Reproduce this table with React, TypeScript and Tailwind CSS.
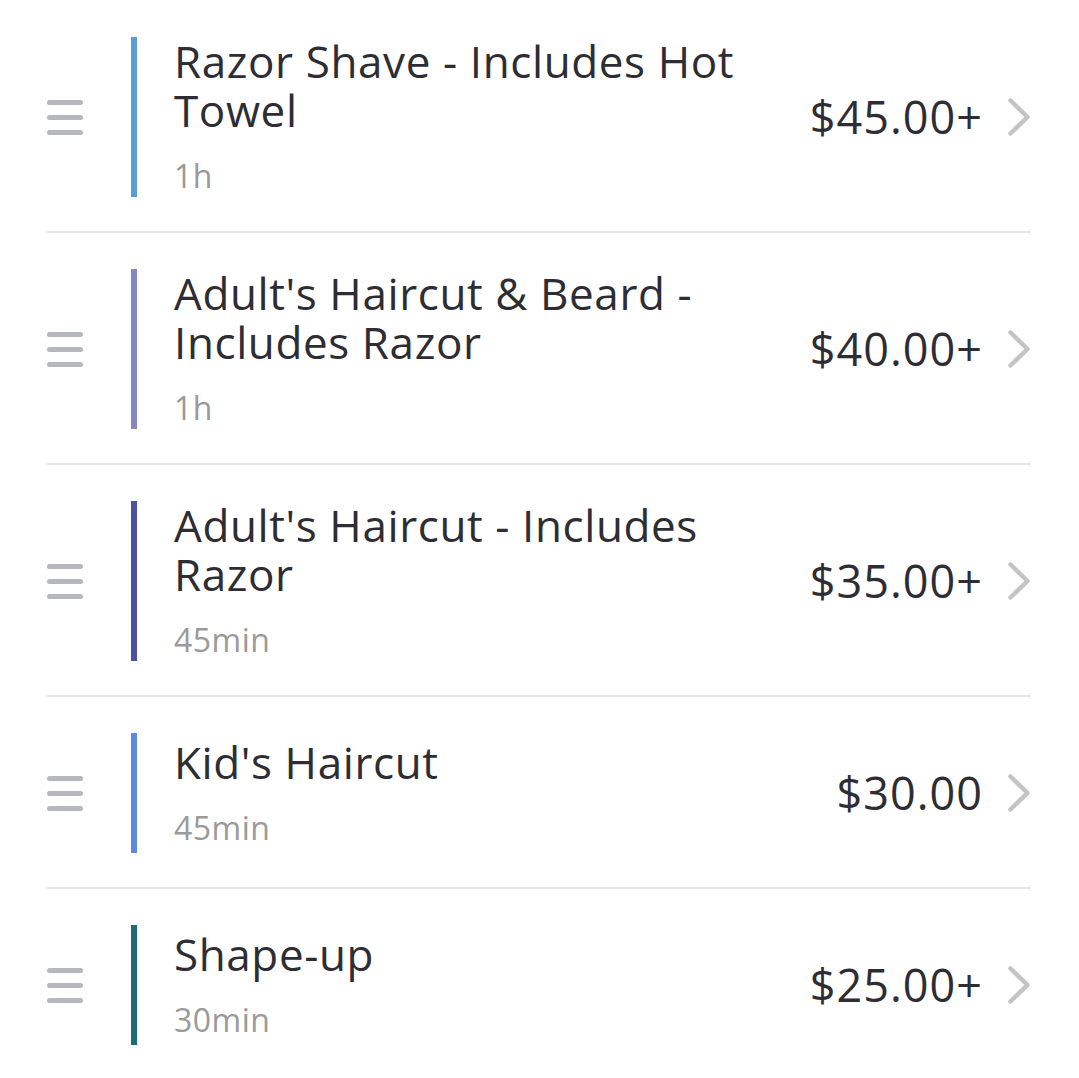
const services = [
  { name: "Razor Shave - Includes Hot Towel", duration: "1h", price: "$45.00+", bar: "bg-[#5b9bd8]" },
  { name: "Adult's Haircut & Beard - Includes Razor", duration: "1h", price: "$40.00+", bar: "bg-[#8688c2]" },
  { name: "Adult's Haircut - Includes Razor", duration: "45min", price: "$35.00+", bar: "bg-[#4a50a6]" },
  { name: "Kid's Haircut", duration: "45min", price: "$30.00", bar: "bg-[#5f88e0]" },
  { name: "Shape-up", duration: "30min", price: "$25.00+", bar: "bg-[#1e6a76]" },
];

function DragHandle() {
  return (
    <div className="flex w-[36px] shrink-0 flex-col gap-[10px]">
      <span className="h-[5px] rounded-full bg-[#b7b8be]" />
      <span className="h-[5px] rounded-full bg-[#b7b8be]" />
      <span className="h-[5px] rounded-full bg-[#b7b8be]" />
    </div>
  );
}

function Chevron() {
  return (
    <svg className="ml-[24px] h-[40px] w-[24px] shrink-0" viewBox="0 0 24 40" fill="none">
      <path d="M3.5 3.5 L20.5 20 L3.5 36.5" stroke="#c4c4c8" strokeWidth="4.5" strokeLinecap="round" strokeLinejoin="round" />
    </svg>
  );
}

export default function App() {
  return (
    <div className="min-h-screen bg-white pl-[47px] pr-[48px] pt-px font-['Open_Sans',sans-serif]">
      {services.map((s, i) => (
        <div key={s.name}>
          {/* 区切り線 */}
          {i > 0 && <div className="h-[2px] bg-[#e6e6e8]" />}
          <div className="flex items-center pt-[36px] pb-[34px]">
            <DragHandle />
            <div className="ml-[48px] flex min-h-[120px] flex-1 items-stretch">
              <div className={`w-[6px] shrink-0 ${s.bar}`} />
              <div className="ml-[37px] flex flex-1 flex-col justify-center pr-[24px]">
                <div className="text-[44px] leading-[49px] tracking-[0.6px] text-[#2d2d33]">{s.name}</div>
                <div className="mt-[19px] text-[32px] leading-[43px] tracking-[0.5px] text-[#9a9a9a]">{s.duration}</div>
              </div>
            </div>
            <div className="shrink-0 text-[45px] tracking-[1px] text-[#2d2d33]">{s.price}</div>
            <Chevron />
          </div>
        </div>
      ))}
    </div>
  );
}
